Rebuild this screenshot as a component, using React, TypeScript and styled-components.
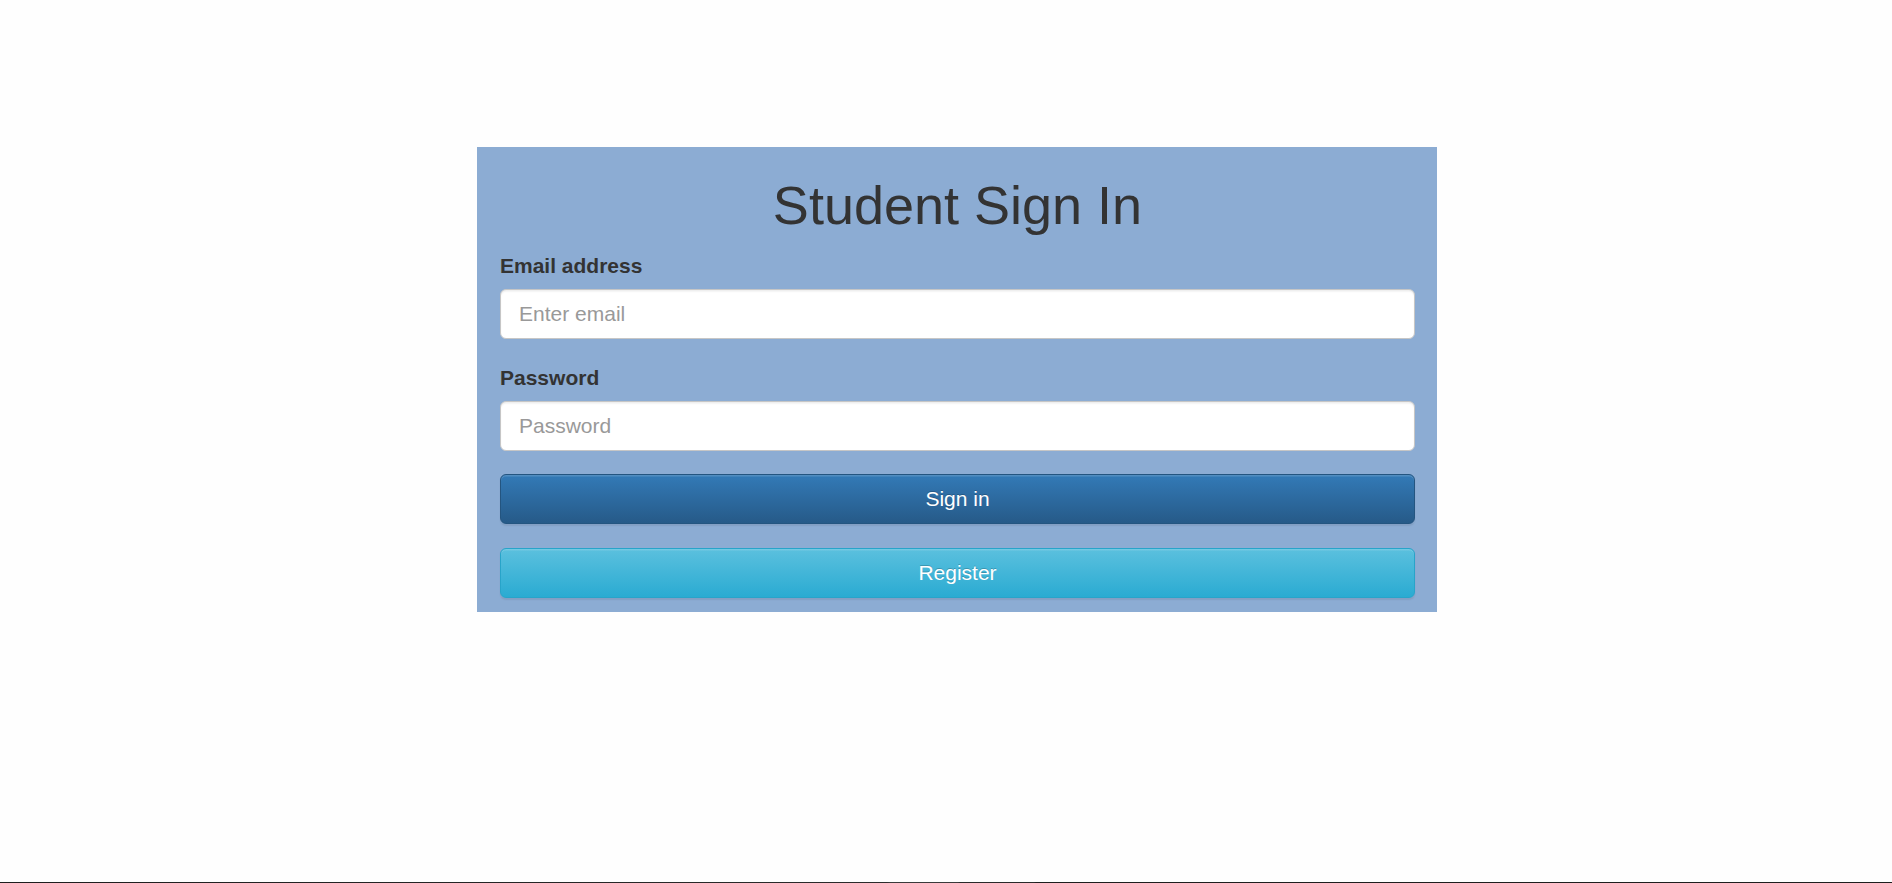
import React from "react";
import styled, { createGlobalStyle } from "styled-components";

const GlobalStyle = createGlobalStyle`
  html, body {
    margin: 0;
    padding: 0;
    background: #fefefe;
    font-family: "Liberation Sans", Arial, Helvetica, sans-serif;
    color: #333333;
  }
  * { box-sizing: border-box; }
`;

const Page = styled.div`
  height: 883px;
  display: flex;
  flex-direction: column;
`;

const Main = styled.main`
  flex: 1;
  display: flex;
  justify-content: center;
  align-items: flex-start;
  padding: 147px 0 0 22px;
`;

const Panel = styled.form`
  width: 960px;
  background: #8cacd3;
  padding: 0 22px 14px 23px;
  display: flex;
  flex-direction: column;
`;

const Title = styled.h1`
  margin: 28px 0 15px;
  font-size: 54px;
  line-height: 60px;
  font-weight: 400;
  text-align: center;
  color: #333333;
`;

const Group = styled.div<{ $gap: number }>`
  display: flex;
  flex-direction: column;
  margin-bottom: ${(p) => p.$gap}px;
`;

const Label = styled.label`
  font-size: 21px;
  line-height: 30px;
  font-weight: 700;
  color: #333333;
  padding-top: 1px;
  margin-bottom: 8px;
`;

const Input = styled.input`
  height: 50px;
  width: 100%;
  padding: 0 18px;
  font-family: inherit;
  font-size: 21px;
  color: #555555;
  background: #ffffff;
  border: 1.5px solid #c6c6c6;
  border-radius: 6px;
  box-shadow: inset 0 1.5px 1.5px rgba(0, 0, 0, 0.075);
  outline: none;
  &::placeholder {
    color: #999999;
  }
`;

const Button = styled.button<{ $variant: "primary" | "info" }>`
  height: 50px;
  width: 100%;
  font-family: inherit;
  font-size: 21px;
  color: #ffffff;
  border-radius: 6px;
  cursor: pointer;
  text-shadow: 0 -1px 0 rgba(0, 0, 0, 0.2);
  box-shadow: inset 0 1.5px 0 rgba(255, 255, 255, 0.15), 0 1.5px 1.5px rgba(0, 0, 0, 0.075);
  border: 1.5px solid ${(p) => (p.$variant === "primary" ? "#245580" : "#28a4c9")};
  background: ${(p) =>
    p.$variant === "primary"
      ? "linear-gradient(to bottom, #337ab7 0%, #265a88 100%)"
      : "linear-gradient(to bottom, #5bc0de 0%, #2aabd2 100%)"};
`;

const BottomLine = styled.div`
  height: 1px;
  flex: none;
  background: linear-gradient(
    to right,
    #1e1e1e 0,
    #222 240px,
    #262626 600px,
    #2c2c2c 887px,
    #3a3a3a 890px,
    #3a3a3a 958px,
    #2a2a2a 960px,
    #2a2a2a 1034px,
    #1e1e1e 1036px,
    #1e1e1e 100%
  );
`;

export default function App() {
  return (
    <>
      <GlobalStyle />
      <Page>
        <Main>
          <Panel onSubmit={(e) => e.preventDefault()}>
            <Title>Student Sign In</Title>
            <Group $gap={23}>
              <Label htmlFor="email">Email address</Label>
              <Input id="email" type="email" placeholder="Enter email" />
            </Group>
            <Group $gap={23}>
              <Label htmlFor="password">Password</Label>
              <Input id="password" type="password" placeholder="Password" />
            </Group>
            <Group $gap={24}>
              <Button type="submit" $variant="primary">Sign in</Button>
            </Group>
            <Button type="button" $variant="info">Register</Button>
          </Panel>
        </Main>
        <BottomLine />
      </Page>
    </>
  );
}
